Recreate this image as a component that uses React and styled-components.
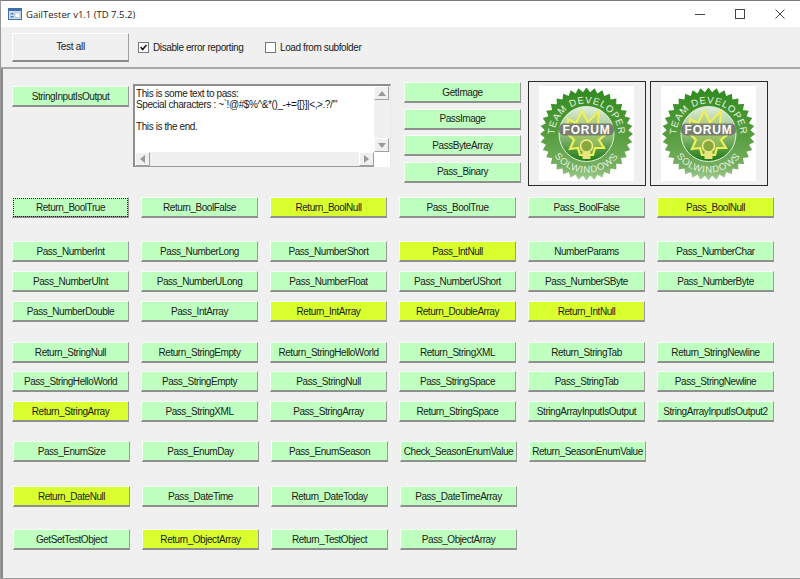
import React from 'react';
import styled, {createGlobalStyle} from 'styled-components';

const GlobalStyle = createGlobalStyle`
  html, body {
    margin: 0;
    padding: 0;
    background: #fff;
  }
  * {
    box-sizing: border-box;
  }
`;

const G = 'green';
const Y = 'yellow';

// every row: gap above it, left inset, then [label, colour]
const buttonRows = [
  {top: 10, left: 9, items: [['Return_BoolTrue', G, true], ['Return_BoolFalse', G], ['Return_BoolNull', Y], ['Pass_BoolTrue', G], ['Pass_BoolFalse', G], ['Pass_BoolNull', Y]]},
  {top: 23, left: 9, items: [['Pass_NumberInt', G], ['Pass_NumberLong', G], ['Pass_NumberShort', G], ['Pass_IntNull', Y], ['NumberParams', G], ['Pass_NumberChar', G]]},
  {top: 9, left: 9, items: [['Pass_NumberUInt', G], ['Pass_NumberULong', G], ['Pass_NumberFloat', G], ['Pass_NumberUShort', G], ['Pass_NumberSByte', G], ['Pass_NumberByte', G]]},
  {top: 9, left: 9, items: [['Pass_NumberDouble', G], ['Pass_IntArray', G], ['Return_IntArray', Y], ['Return_DoubleArray', Y], ['Return_IntNull', Y]]},
  {top: 20, left: 9, items: [['Return_StringNull', G], ['Return_StringEmpty', G], ['Return_StringHelloWorld', G], ['Return_StringXML', G], ['Return_StringTab', G], ['Return_StringNewline', G]]},
  {top: 8, left: 9, items: [['Pass_StringHelloWorld', G], ['Pass_StringEmpty', G], ['Pass_StringNull', G], ['Pass_StringSpace', G], ['Pass_StringTab', G], ['Pass_StringNewline', G]]},
  {top: 9, left: 9, items: [['Return_StringArray', Y], ['Pass_StringXML', G], ['Pass_StringArray', G], ['Return_StringSpace', G], ['StringArrayInputIsOutput', G], ['StringArrayInputIsOutput2', G]]},
  {top: 19, left: 10, items: [['Pass_EnumSize', G], ['Pass_EnumDay', G], ['Pass_EnumSeason', G], ['Check_SeasonEnumValue', G], ['Return_SeasonEnumValue', G]]},
  {top: 24, left: 10, items: [['Return_DateNull', Y], ['Pass_DateTime', G], ['Return_DateToday', G], ['Pass_DateTimeArray', G]]},
  {top: 22, left: 10, items: [['GetSetTestObject', G], ['Return_ObjectArray', Y], ['Return_TestObject', G], ['Pass_ObjectArray', G]]},
];

const sideButtons = ['GetImage', 'PassImage', 'PassByteArray', 'Pass_Binary'];

function sealPoints(count, outer, inner) {
  const points = [];
  for (let i = 0; i < count * 2; i++) {
    const radius = i % 2 ? inner : outer;
    const angle = (Math.PI * i) / count;
    points.push(`${(47.5 + radius * Math.sin(angle)).toFixed(2)},${(48 - radius * Math.cos(angle)).toFixed(2)}`);
  }
  return points.join(' ');
}

function ForumLogo({id}) {
  return (
    <LogoSvg viewBox="0 0 95 95">
      <defs>
        <linearGradient id={`${id}-ring`} x1="0" y1="0" x2="0" y2="1">
          <stop offset="0" stopColor="#2f8a1e" />
          <stop offset="0.55" stopColor="#5a9f42" />
          <stop offset="0.85" stopColor="#76b062" />
          <stop offset="1" stopColor="#a6cf96" />
        </linearGradient>
        <linearGradient id={`${id}-core`} x1="0" y1="0" x2="0" y2="1">
          <stop offset="0" stopColor="#dfeeda" />
          <stop offset="0.5" stopColor="#93c07e" />
          <stop offset="1" stopColor="#1c7a14" />
        </linearGradient>
        <path id={`${id}-top`} d="M 16 55 A 32 32 0 1 1 79 55" />
        <path id={`${id}-bottom`} d="M 9.5 58 A 39.5 39.5 0 0 0 85.5 58" />
      </defs>
      <rect width="95" height="95" fill="#fff" />
      <polygon points={sealPoints(36, 46.5, 42)} fill={`url(#${id}-ring)`} />
      <circle cx="47.5" cy="48" r="27.5" fill={`url(#${id}-core)`} stroke="#e4f0dc" strokeWidth="1" />
      <polygon
        points="29,33 37,37 43,25 49,36 60,25 59,41 68,47 60,54 65,62 56,62 54,69 41,69 39,62 31,63 35,54 28,47"
        fill="#b8cf5a"
        fillOpacity="0.45"
        stroke="#eef05a"
        strokeWidth="2.2"
      />
      <circle cx="47.5" cy="60" r="6" fill="#8aa83f" stroke="#f0ee8a" strokeWidth="1.6" />
      <path d="M43.5 66 H51.5 V73 H43.5 Z" fill="#e8e67a" />
      <SealText fontSize="9.6">
        <textPath href={`#${id}-top`} startOffset="50%" textAnchor="middle">TEAM DEVELOPER</textPath>
      </SealText>
      <SealText fontSize="9.6">
        <textPath href={`#${id}-bottom`} startOffset="50%" textAnchor="middle">SOLWINDOWS</textPath>
      </SealText>
      <rect x="20" y="37.5" width="55" height="12" rx="5" fill="#6f6f6f" fillOpacity="0.85" />
      <ForumText x="47.5" y="48" textAnchor="middle">FORUM</ForumText>
    </LogoSvg>
  );
}

function App() {
  return (
    <Win>
      <GlobalStyle />
      <TitleBar>
        <AppIcon viewBox="0 0 14 14">
          <rect x="0.5" y="1.5" width="13" height="11" fill="#cfe0f2" stroke="#3e6fa8" />
          <rect x="1" y="2" width="12" height="2" fill="#3e6fa8" />
          <rect x="2.5" y="6" width="3" height="1.5" fill="#5a7fa8" />
          <rect x="2.5" y="9" width="3" height="1.5" fill="#5a7fa8" />
          <rect x="7" y="6" width="5" height="4.5" fill="#fff" stroke="#7d9cc0" strokeWidth="0.5" />
        </AppIcon>
        <Title>GailTester v1.1 (TD 7.5.2)</Title>
        <WindowControls>
          <WindowControl viewBox="0 0 10 10">
            <path d="M0 5.5 H10" stroke="#444" fill="none" />
          </WindowControl>
          <WindowControl viewBox="0 0 10 10">
            <rect x="0.5" y="0.5" width="9" height="9" stroke="#444" fill="none" />
          </WindowControl>
          <WindowControl viewBox="0 0 10 10">
            <path d="M0.5 0.5 L9.5 9.5 M9.5 0.5 L0.5 9.5" stroke="#444" fill="none" />
          </WindowControl>
        </WindowControls>
      </TitleBar>

      <Toolbar>
        <TestAll>Test all</TestAll>
        <CheckLabel $width={127}>
          <CheckBox>
            <svg width="11" height="11" viewBox="0 0 11 11">
              <path d="M2 5 L4.5 8 L9 2.5" stroke="#111" strokeWidth="1.8" fill="none" />
            </svg>
          </CheckBox>
          Disable error reporting
        </CheckLabel>
        <CheckLabel>
          <CheckBox />
          Load from subfolder
        </CheckLabel>
      </Toolbar>

      <Content>
        <TopSection>
          <LeadButton>
            <TestButton>StringInputIsOutput</TestButton>
          </LeadButton>
          <TextBox>
            <TextBody>
              {'This is some text to pass:\nSpecial characters : ~`!@#$%^&*()_-+={[}]|<,>.?/\'"\n\nThis is the end.'}
            </TextBody>
            <VerticalBar>
              <ArrowButton><Arrow viewBox="0 0 8 5"><path d="M4 0 L8 5 H0 Z" /></Arrow></ArrowButton>
              <ArrowButton><Arrow viewBox="0 0 8 5"><path d="M0 0 H8 L4 5 Z" /></Arrow></ArrowButton>
            </VerticalBar>
            <HorizontalBar>
              <ArrowButton><Arrow $side viewBox="0 0 5 8"><path d="M5 0 V8 L0 4 Z" /></Arrow></ArrowButton>
              <ArrowButton><Arrow $side viewBox="0 0 5 8"><path d="M0 0 L5 4 L0 8 Z" /></Arrow></ArrowButton>
            </HorizontalBar>
          </TextBox>
          <SideColumn>
            {sideButtons.map((label) => (
              <TestButton key={label}>{label}</TestButton>
            ))}
          </SideColumn>
          <Picture>
            <ForumLogo id="logo-a" />
          </Picture>
          <Picture>
            <ForumLogo id="logo-b" />
          </Picture>
        </TopSection>

        {buttonRows.map(({top, left, items}, index) => (
          <ButtonRow key={index} $top={top} $left={left}>
            {items.map(([label, colour, focused]) => (
              <TestButton key={label} $colour={colour} $focused={focused}>
                {label}
              </TestButton>
            ))}
          </ButtonRow>
        ))}
      </Content>
    </Win>
  );
}

const Win = styled.div`
  width: 800px;
  height: 579px;
  display: flex;
  flex-direction: column;
  overflow: hidden;
  border-top: 1px solid #7a7a7a;
  border-left: 1px solid #9a9a9a;
  border-bottom: 1px solid #9a9a9a;
  background: #f0f0f0;
  font-family: 'Liberation Sans', Arial, sans-serif;
  color: #1a1a1a;
`;

const TitleBar = styled.div`
  height: 26px;
  flex: none;
  display: flex;
  align-items: center;
  padding-left: 7px;
  background: #fff;
`;

const AppIcon = styled.svg`
  width: 14px;
  height: 14px;
`;

const Title = styled.span`
  margin-left: 4px;
  font-family: 'Open Sans', 'Liberation Sans', sans-serif;
  font-size: 9.5px;
  color: #222;
`;

const WindowControls = styled.div`
  margin-left: auto;
  display: flex;
  gap: 30px;
  padding-right: 15px;
  align-items: center;
`;

const WindowControl = styled.svg`
  width: 10px;
  height: 10px;
`;

const Toolbar = styled.div`
  height: 42px;
  flex: none;
  display: flex;
  align-items: center;
  padding-left: 11px;
  border-bottom: 2px solid #a8a8a8;
`;

const TestAll = styled.div`
  width: 117px;
  height: 29px;
  margin-right: 9px;
  display: flex;
  align-items: center;
  justify-content: center;
  font-size: 10px;
  letter-spacing: -0.3px;
  background: #f0f0f0;
  border-top: 1px solid #fff;
  border-left: 1px solid #fff;
  border-right: 1px solid #a0a0a0;
  border-bottom: 2px solid #8a8a8a;
`;

const CheckLabel = styled.label`
  display: flex;
  align-items: center;
  gap: 4px;
  font-size: 10px;
  letter-spacing: -0.4px;
  ${({$width}) => $width && `width: ${$width}px;`}
`;

const CheckBox = styled.span`
  width: 11px;
  height: 11px;
  display: flex;
  align-items: center;
  justify-content: center;
  background: #fff;
  border: 1px solid #777;
`;

const Content = styled.div`
  flex: 1;
  padding-top: 12px;
  border-left: 2px solid #8a8a8a;
`;

const TopSection = styled.div`
  display: flex;
  align-items: flex-start;
  height: 106px;
`;

const LeadButton = styled.div`
  margin: 5px 4px 0 9px;
`;

const TestButton = styled.div`
  width: 117px;
  height: 21px;
  flex: none;
  display: flex;
  align-items: center;
  justify-content: center;
  white-space: nowrap;
  font-size: 10px;
  letter-spacing: -0.45px;
  color: #1c1c1c;
  background: ${({$colour}) => ($colour === 'yellow' ? '#d9ff2e' : '#bfffc0')};
  border-top: 1px solid #f4fff4;
  border-left: 1px solid #f4fff4;
  border-right: 1px solid #9a9a9a;
  border-bottom: 2px solid #8f8f8f;
  ${({$focused}) => $focused && 'outline: 1px dotted #222; outline-offset: -2px;'}
`;

const TextBox = styled.div`
  width: 258px;
  height: 83px;
  margin-top: 3px;
  display: grid;
  grid-template-columns: 1fr 16px;
  grid-template-rows: 1fr 15px;
  background: #fff;
  border-top: 2px solid #8f8f8f;
  border-left: 2px solid #8f8f8f;
  border-right: 1px solid #e8e8e8;
`;

const TextBody = styled.div`
  padding: 2px 0 0 1px;
  font-size: 10px;
  letter-spacing: -0.4px;
  line-height: 11px;
  white-space: pre;
  overflow: hidden;
`;

const VerticalBar = styled.div`
  display: flex;
  flex-direction: column;
  justify-content: space-between;
  background: #f0f0f0;
`;

const HorizontalBar = styled.div`
  display: flex;
  justify-content: space-between;
  background: #f0f0f0;
  border-bottom: 1px solid #9a9a9a;
`;

const ArrowButton = styled.div`
  width: 15px;
  height: 14px;
  display: flex;
  align-items: center;
  justify-content: center;
  background: #f0f0f0;
  border-right: 1px solid #a0a0a0;
  border-bottom: 1px solid #a0a0a0;
  border-top: 1px solid #fff;
  border-left: 1px solid #fff;
`;

const Arrow = styled.svg`
  width: ${({$side}) => ($side ? 5 : 8)}px;
  height: ${({$side}) => ($side ? 8 : 5)}px;
  fill: #9a9a9a;
`;

const SideColumn = styled.div`
  width: 117px;
  margin: 1px 7px 0 13px;
  display: flex;
  flex-direction: column;
  gap: 5.5px;
`;

const Picture = styled.div`
  width: 118px;
  height: 105px;
  margin-right: 4px;
  padding: 4px 0 0 10px;
  border: 1px solid #2a2a2a;
  background: #f0f0f0;
`;

const LogoSvg = styled.svg`
  display: block;
  width: 95px;
  height: 95px;
`;

const SealText = styled.text`
  font-family: 'Liberation Sans', Arial, sans-serif;
  letter-spacing: 0.8px;
  fill: #e8f3e0;
`;

const ForumText = styled.text`
  font-family: 'Liberation Sans', Arial, sans-serif;
  font-size: 12px;
  font-weight: bold;
  letter-spacing: 0.8px;
  fill: #fff;
`;

const ButtonRow = styled.div`
  display: flex;
  gap: 12px;
  margin-top: ${({$top}) => $top}px;
  padding-left: ${({$left}) => $left}px;
`;

export default App;
